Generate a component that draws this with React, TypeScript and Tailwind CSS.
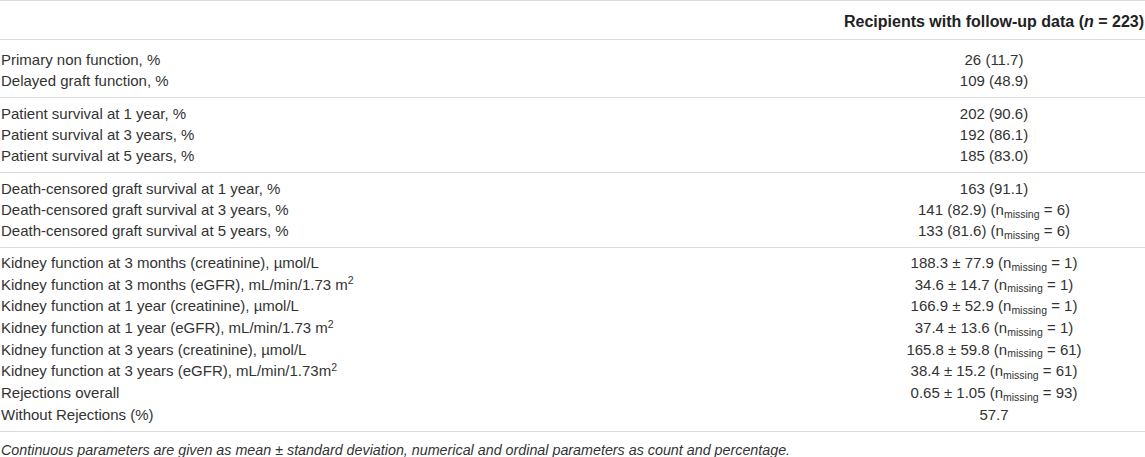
import React from "react";

type Row = { label: React.ReactNode; value: React.ReactNode };

const Miss = ({ n }: { n: string }) => (
  <>
    (n<sub className="text-[10.5px]">missing</sub> = {n})
  </>
);

const Sq = () => <sup className="text-[10.5px]">2</sup>;

const groups: { rows: Row[]; pad: string; rowH: string }[] = [
  {
    pad: "pt-[9px] pb-[6px]",
    rowH: "h-[21px]",
    rows: [
      { label: "Primary non function, %", value: "26 (11.7)" },
      { label: "Delayed graft function, %", value: "109 (48.9)" },
    ],
  },
  {
    pad: "pt-[5px] pb-[6px]",
    rowH: "h-[21px]",
    rows: [
      { label: "Patient survival at 1 year, %", value: "202 (90.6)" },
      { label: "Patient survival at 3 years, %", value: "192 (86.1)" },
      { label: "Patient survival at 5 years, %", value: "185 (83.0)" },
    ],
  },
  {
    pad: "pt-[5px] pb-[6px]",
    rowH: "h-[21px]",
    rows: [
      { label: "Death-censored graft survival at 1 year, %", value: "163 (91.1)" },
      {
        label: "Death-censored graft survival at 3 years, %",
        value: (
          <>
            141 (82.9) <Miss n="6" />
          </>
        ),
      },
      {
        label: "Death-censored graft survival at 5 years, %",
        value: (
          <>
            133 (81.6) <Miss n="6" />
          </>
        ),
      },
    ],
  },
  {
    pad: "pt-[4px] pb-[5.4px]",
    rowH: "h-[21.7px]",
    rows: [
      {
        label: "Kidney function at 3 months (creatinine), µmol/L",
        value: (
          <>
            188.3 ± 77.9 <Miss n="1" />
          </>
        ),
      },
      {
        label: (
          <>
            Kidney function at 3 months (eGFR), mL/min/1.73 m<Sq />
          </>
        ),
        value: (
          <>
            34.6 ± 14.7 <Miss n="1" />
          </>
        ),
      },
      {
        label: "Kidney function at 1 year (creatinine), µmol/L",
        value: (
          <>
            166.9 ± 52.9 <Miss n="1" />
          </>
        ),
      },
      {
        label: (
          <>
            Kidney function at 1 year (eGFR), mL/min/1.73 m<Sq />
          </>
        ),
        value: (
          <>
            37.4 ± 13.6 <Miss n="1" />
          </>
        ),
      },
      {
        label: "Kidney function at 3 years (creatinine), µmol/L",
        value: (
          <>
            165.8 ± 59.8 <Miss n="61" />
          </>
        ),
      },
      {
        label: (
          <>
            Kidney function at 3 years (eGFR), mL/min/1.73m<Sq />
          </>
        ),
        value: (
          <>
            38.4 ± 15.2 <Miss n="61" />
          </>
        ),
      },
      {
        label: "Rejections overall",
        value: (
          <>
            0.65 ± 1.05 <Miss n="93" />
          </>
        ),
      },
      { label: "Without Rejections (%)", value: "57.7" },
    ],
  },
];

export default function App() {
  return (
    <div className="w-[1145px] h-[457px] bg-white text-[15px] text-[#333] font-['Liberation_Sans',Arial,sans-serif] overflow-hidden">
      <div className="border-t border-[#dcdcdc]">
        <div className="grid grid-cols-[1fr_302px] h-[39px] items-center border-b border-[#dcdcdc]">
          <div />
          <div className="text-center font-bold text-[16px] text-[#222] whitespace-nowrap pt-[3px]">
            Recipients with follow-up data (<i>n</i> = 223)
          </div>
        </div>
        {groups.map((g, gi) => (
          <div key={gi} className={`border-b border-[#dcdcdc] ${g.pad}`}>
            {g.rows.map((r, ri) => (
              <div key={ri} className={`grid grid-cols-[1fr_302px] items-center ${g.rowH}`}>
                <div className="pl-[1px] whitespace-nowrap">{r.label}</div>
                <div className="text-center whitespace-nowrap">{r.value}</div>
              </div>
            ))}
          </div>
        ))}
        <div className="pt-[8px] italic text-[14.3px] leading-[20px] pl-[1px] whitespace-nowrap">
          Continuous parameters are given as mean ± standard deviation, numerical and ordinal parameters as count and percentage.
        </div>
      </div>
    </div>
  );
}
